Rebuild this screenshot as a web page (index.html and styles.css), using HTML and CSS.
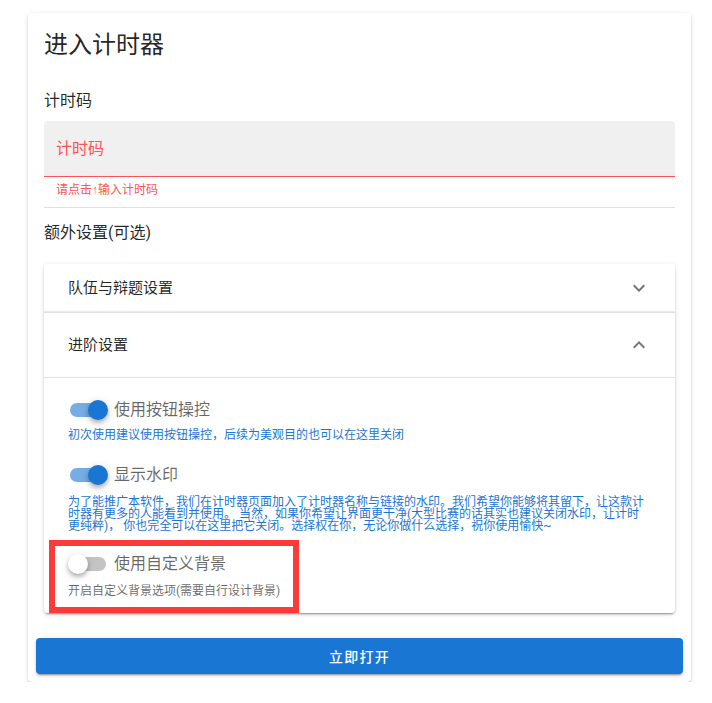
FILE: index.html
```html
<!DOCTYPE html>
<html lang="zh-CN">
<head>
<meta charset="utf-8">
<title>进入计时器</title>
<link rel="stylesheet" href="styles.css">
</head>
<body>
<div class="card">
  <div class="card-title">进入计时器</div>
  <div class="card-text">
    <div class="field-label">计时码</div>
    <div class="field"><span class="field-placeholder">计时码</span></div>
    <div class="field-hint">请点击<span class="arrow">↑</span>输入计时码</div>
    <div class="divider"></div>
    <div class="section-label">额外设置(可选)</div>
    <div class="panels">
      <div class="panel">
        <div class="panel-header">
          <span>队伍与辩题设置</span>
          <svg class="chevron" viewBox="0 0 24 24" width="24" height="24"><path d="M7.41,8.58L12,13.17L16.59,8.58L18,10L12,16L6,10L7.41,8.58Z"/></svg>
        </div>
      </div>
      <div class="panel panel-active">
        <div class="panel-header panel-header-active">
          <span>进阶设置</span>
          <svg class="chevron" viewBox="0 0 24 24" width="24" height="24"><path d="M7.41,15.41L12,10.83L16.59,15.41L18,14L12,8L6,14L7.41,15.41Z"/></svg>
        </div>
        <div class="panel-content">
          <div class="option option-first">
            <div class="switch switch-on"><span class="switch-track"></span><span class="switch-thumb"></span></div>
            <span class="switch-label">使用按钮操控</span>
          </div>
          <p class="caption caption-blue caption-first">初次使用建议使用按钮操控，后续为美观目的也可以在这里关闭</p>
          <div class="option option-second">
            <div class="switch switch-on"><span class="switch-track"></span><span class="switch-thumb"></span></div>
            <span class="switch-label">显示水印</span>
          </div>
          <p class="caption caption-blue caption-para">为了能推广本软件，我们在计时器页面加入了计时器名称与链接的水印。我们希望你能够将其留下，让这款计时器有更多的人能看到并使用。 当然，如果你希望让界面更干净(大型比赛的话其实也建议关闭水印，让计时更纯粹)， 你也完全可以在这里把它关闭。选择权在你，无论你做什么选择，祝你使用愉快~</p>
          <div class="highlight-block">
            <div class="option">
              <div class="switch switch-off"><span class="switch-track"></span><span class="switch-thumb"></span></div>
              <span class="switch-label">使用自定义背景</span>
            </div>
            <p class="caption caption-gray">开启自定义背景选项(需要自行设计背景)</p>
            <div class="highlight-frame"></div>
          </div>
        </div>
      </div>
    </div>
  </div>
  <div class="card-actions">
    <button class="btn" type="button">立即打开</button>
  </div>
</div>
</body>
</html>
```

FILE: styles.css
```css
html, body {
  margin: 0;
  padding: 0;
  background: #ffffff;
}

body {
  font-family: Roboto, "Noto Sans CJK SC", sans-serif;
  color: rgba(0, 0, 0, 0.87);
}

.card {
  margin: 13px 0 0 28px;
  width: 663px;
  background: #fff;
  border-radius: 4px;
  box-shadow: 0 3px 1px -2px rgba(0,0,0,.2), 0 2px 2px 0 rgba(0,0,0,.14), 0 1px 5px 0 rgba(0,0,0,.12);
}

.card-title {
  padding: 16px;
  font-size: 24px;
  line-height: 32px;
  font-weight: 400;
  color: rgba(0, 0, 0, 0.87);
}

.card-text {
  padding: 0 16px 17px;
}

.field-label {
  margin-top: 12px;
  font-size: 16px;
  line-height: 24px;
}

.field {
  margin-top: 8px;
  height: 56px;
  box-sizing: border-box;
  background: #f0f0f0;
  border-radius: 4px 4px 0 0;
  border-bottom: 1px solid #ff5252;
  padding: 0 12px;
  display: flex;
  align-items: center;
}

.field-placeholder {
  font-size: 16px;
  line-height: 20px;
  color: #ff5252;
}

.field-hint {
  margin-top: 7px;
  padding: 0 12px;
  font-size: 12px;
  line-height: 12px;
  color: #ff5252;
}

.arrow {
  font-family: "Liberation Sans", sans-serif;
}

.divider {
  margin-top: 11px;
  height: 1px;
  background: rgba(0, 0, 0, 0.12);
}

.section-label {
  margin-top: 13px;
  font-size: 16px;
  line-height: 24px;
}

.panels {
  margin-top: 19px;
  border-radius: 4px;
  background: #fff;
  box-shadow: 0 3px 1px -2px rgba(0,0,0,.2), 0 2px 2px 0 rgba(0,0,0,.14), 0 1px 5px 0 rgba(0,0,0,.12);
}

.panel-active {
  border-top: 1px solid rgba(0, 0, 0, 0.12);
  box-shadow: 0 -1px 1px rgba(0,0,0,.08);
}

.panel-header {
  height: 48px;
  box-sizing: border-box;
  padding: 0 24px;
  display: flex;
  align-items: center;
  justify-content: space-between;
  font-size: 15px;
  line-height: 20px;
  color: rgba(0, 0, 0, 0.87);
}

.panel-header-active {
  height: 65px;
  border-bottom: 1px solid rgba(0, 0, 0, 0.12);
}

.chevron {
  fill: rgba(0, 0, 0, 0.54);
  flex: none;
}

.panel-content {
  padding: 0 24px 16px;
}

.option {
  display: flex;
  align-items: center;
  height: 24px;
}

.option-first {
  margin-top: 20px;
}

.option-second {
  margin-top: 22px;
}

.switch {
  position: relative;
  width: 38px;
  height: 24px;
  margin-right: 8px;
  flex: none;
}

.switch-track {
  position: absolute;
  left: 2px;
  top: 5px;
  width: 36px;
  height: 14px;
  border-radius: 8px;
}

.switch-thumb {
  position: absolute;
  left: 0;
  top: 2px;
  width: 20px;
  height: 20px;
  border-radius: 50%;
  box-shadow: 0 2px 4px -1px rgba(0,0,0,.2), 0 4px 5px 0 rgba(0,0,0,.14), 0 1px 10px 0 rgba(0,0,0,.12);
}

.switch-on .switch-track {
  background: #75ade4;
}

.switch-on .switch-thumb {
  left: 20px;
  background: #1976d2;
}

.switch-off .switch-track {
  background: #c4c4c4;
}

.switch-off .switch-thumb {
  background: #ffffff;
}

.switch-label {
  font-size: 16px;
  line-height: 24px;
  color: rgba(0, 0, 0, 0.6);
}

.caption {
  margin: 7px 0 0;
  font-size: 12px;
  line-height: 12px;
}

.caption-blue {
  color: #1976d2;
}

.caption-para {
  margin-top: 9px;
}

.caption-gray {
  margin-top: 9px;
  color: rgba(0, 0, 0, 0.6);
}

.highlight-block {
  position: relative;
  margin-top: 20px;
}

.highlight-frame {
  position: absolute;
  top: -12px;
  left: -19px;
  width: 250px;
  height: 73px;
  box-sizing: border-box;
  border: 6px solid #fc3a3a;
  pointer-events: none;
}

.card-actions {
  padding: 8px;
}

.btn {
  display: block;
  width: 100%;
  height: 36px;
  border: none;
  border-radius: 4px;
  background: #1976d2;
  color: #fff;
  font-family: Roboto, "Noto Sans CJK SC", sans-serif;
  font-size: 14px;
  font-weight: 500;
  letter-spacing: 1.25px;
  box-shadow: 0 3px 1px -2px rgba(0,0,0,.2), 0 2px 2px 0 rgba(0,0,0,.14), 0 1px 5px 0 rgba(0,0,0,.12);
  cursor: pointer;
}
```
